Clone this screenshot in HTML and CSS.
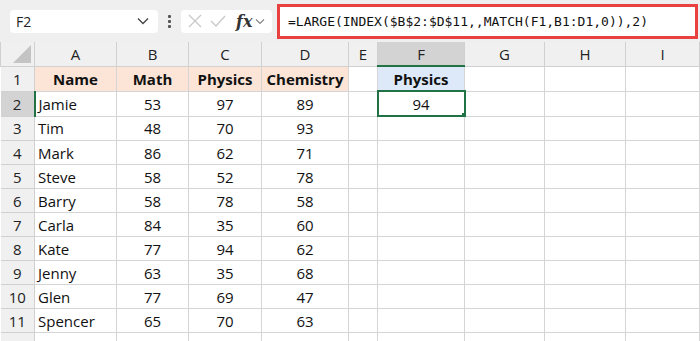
FILE: index.html
```html
<!DOCTYPE html>
<html lang="en">
<head>
  <meta charset="UTF-8">
  <title>LARGE with INDEX/MATCH</title>
  <link rel="stylesheet" href="styles.css">
</head>
<body>

<!-- FORMULA BAR -->
<div class="toolbar">
  <div class="name-box">
    <span>F2</span>
    <svg class="chev" width="12" height="8" viewBox="0 0 12 8"><path d="M1 1.5 L6 6.5 L11 1.5" fill="none" stroke="#444" stroke-width="1.3"/></svg>
  </div>
  <div class="dots"><i></i><i></i><i></i></div>
  <div class="fx-box">
    <svg width="14" height="14" viewBox="0 0 14 14"><path d="M1 1 L13 13 M13 1 L1 13" stroke="#c8c8c8" stroke-width="1.3"/></svg>
    <svg width="16" height="14" viewBox="0 0 16 14"><path d="M1 7 L6 12 L15 2" fill="none" stroke="#c8c8c8" stroke-width="1.3"/></svg>
    <span class="fx">fx</span>
    <svg width="10" height="7" viewBox="0 0 10 7"><path d="M1 1.5 L5 5.5 L9 1.5" fill="none" stroke="#888" stroke-width="1.2"/></svg>
  </div>
  <div class="formula">=LARGE(INDEX($B$2:$D$11,,MATCH(F1,B1:D1,0)),2)</div>
</div>

<!-- GRID -->
<table class="sheet">
  <colgroup>
    <col style="width:34px"><col style="width:82px"><col style="width:72px"><col style="width:73px">
    <col style="width:87px"><col style="width:29px"><col style="width:87px"><col style="width:80px">
    <col style="width:81px"><col>
  </colgroup>
  <tr class="col-heads">
    <th class="corner"><span class="tri"></span></th>
    <th>A</th><th>B</th><th>C</th><th>D</th><th>E</th><th class="sel-col">F</th><th>G</th><th>H</th><th>I</th>
  </tr>
  <tr>
    <th class="rh">1</th>
    <td class="hd">Name</td><td class="hd">Math</td><td class="hd">Physics</td><td class="hd">Chemistry</td>
    <td></td><td class="hd blue">Physics</td><td></td><td></td><td></td>
  </tr>
  <tr>
    <th class="rh sel-row">2</th>
    <td class="nm">Jamie</td><td>53</td><td>97</td><td>89</td>
    <td></td><td class="active">94<span class="handle"></span></td><td></td><td></td><td></td>
  </tr>
  <tr><th class="rh">3</th><td class="nm">Tim</td><td>48</td><td>70</td><td>93</td><td></td><td></td><td></td><td></td><td></td></tr>
  <tr><th class="rh">4</th><td class="nm">Mark</td><td>86</td><td>62</td><td>71</td><td></td><td></td><td></td><td></td><td></td></tr>
  <tr><th class="rh">5</th><td class="nm">Steve</td><td>58</td><td>52</td><td>78</td><td></td><td></td><td></td><td></td><td></td></tr>
  <tr><th class="rh">6</th><td class="nm">Barry</td><td>58</td><td>78</td><td>58</td><td></td><td></td><td></td><td></td><td></td></tr>
  <tr><th class="rh">7</th><td class="nm">Carla</td><td>84</td><td>35</td><td>60</td><td></td><td></td><td></td><td></td><td></td></tr>
  <tr><th class="rh">8</th><td class="nm">Kate</td><td>77</td><td>94</td><td>62</td><td></td><td></td><td></td><td></td><td></td></tr>
  <tr><th class="rh">9</th><td class="nm">Jenny</td><td>63</td><td>35</td><td>68</td><td></td><td></td><td></td><td></td><td></td></tr>
  <tr><th class="rh">10</th><td class="nm">Glen</td><td>77</td><td>69</td><td>47</td><td></td><td></td><td></td><td></td><td></td></tr>
  <tr><th class="rh">11</th><td class="nm">Spencer</td><td>65</td><td>70</td><td>63</td><td></td><td></td><td></td><td></td><td></td></tr>
  <tr><th class="rh"></th><td></td><td></td><td></td><td></td><td></td><td></td><td></td><td></td><td></td></tr>
</table>

</body>
</html>
```

FILE: styles.css
```css
body {
  margin: 0;
  font-family: "Open Sans", Arial, sans-serif;
  background: #ffffff;
  width: 700px;
  height: 341px;
  overflow: hidden;
}

.toolbar {
  display: flex;
  align-items: center;
  height: 42px;
  background: #efefef;
  padding: 0 2px 0 10px;
  box-sizing: border-box;
}

.name-box {
  display: flex;
  align-items: center;
  justify-content: space-between;
  width: 148px;
  height: 23px;
  background: #ffffff;
  border-radius: 4px;
  padding: 0 9px 0 6px;
  box-sizing: border-box;
  font-size: 14px;
  color: #222;
}

.dots {
  display: flex;
  flex-direction: column;
  gap: 2px;
  margin: 0 10px 0 10px;
}

.dots i {
  display: block;
  width: 3px;
  height: 3px;
  background: #555;
  border-radius: 1px;
}

.fx-box {
  display: flex;
  align-items: center;
  gap: 8px;
  width: 91px;
  height: 23px;
  background: #ffffff;
  border-radius: 4px;
  padding: 0 6px 0 7px;
  box-sizing: border-box;
}

.fx {
  font-family: "DejaVu Serif", "Liberation Serif", serif;
  font-style: italic;
  font-weight: bold;
  font-size: 16px;
  color: #333;
  margin-left: 2px;
  margin-right: -5px;
}

.formula {
  flex: 1;
  margin-left: 5px;
  height: 35px;
  border: 3px solid #e8413f;
  background: #ffffff;
  box-sizing: border-box;
  font-family: "DejaVu Sans Mono", "Liberation Mono", monospace;
  font-size: 13px;
  line-height: 29px;
  padding-left: 8px;
  color: #111;
  white-space: nowrap;
}

.sheet {
  border-collapse: collapse;
  table-layout: fixed;
  width: 700px;
  font-size: 15px;
}

.sheet th,
.sheet td {
  height: 23px;
  padding: 0;
  border: 1px solid #d5d5d5;
  text-align: center;
  color: #111;
  white-space: nowrap;
  overflow: hidden;
}

.col-heads th {
  background: #f0f0f0;
  font-weight: normal;
  color: #222;
  border-color: #d0d0d0;
  border-top: none;
}

.col-heads .sel-col {
  background: #d3d3d3;
  border-bottom: 2px solid #217346;
}

.corner {
  position: relative;
}

.tri {
  position: absolute;
  right: 3px;
  bottom: 3px;
  width: 0;
  height: 0;
  border-left: 18px solid transparent;
  border-bottom: 18px solid #c4c4c4;
}

.sheet .rh {
  background: #f0f0f0;
  font-weight: normal;
  color: #222;
  border-color: #d0d0d0;
  border-left: none;
}

.sheet .rh.sel-row {
  background: #d3d3d3;
  border-right: 2px solid #217346;
}

.sheet .hd {
  background: #fce4d6;
  font-weight: bold;
}

.sheet .hd.blue {
  background: #dde9f8;
}

.sheet .nm {
  text-align: left;
  padding-left: 3px;
}

.sheet .active {
  position: relative;
  border: 2px solid #217346;
}

.handle {
  position: absolute;
  right: -4px;
  bottom: -4px;
  width: 5px;
  height: 5px;
  background: #217346;
  border: 1px solid #ffffff;
}
```
